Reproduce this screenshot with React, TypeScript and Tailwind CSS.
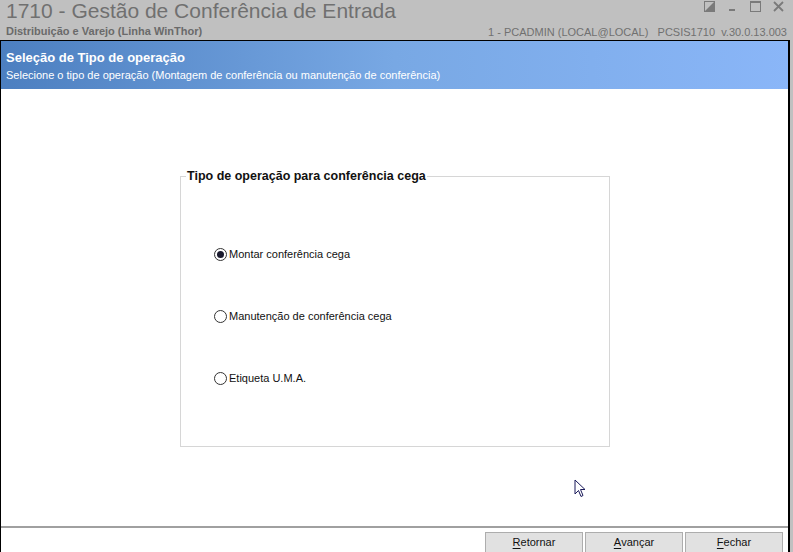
import React from "react";

const font = { fontFamily: "'Liberation Sans', Arial, sans-serif" };
const arial = { fontFamily: "'Liberation Sans', Arial, sans-serif" };

function Radio({ checked, label }: { checked?: boolean; label: string }) {
  return (
    <div className="flex items-center gap-[2px] h-[14px]">
      <span className="w-[13px] h-[13px] rounded-full border border-[#333] bg-white flex items-center justify-center">
        {checked && <span className="w-[7px] h-[7px] rounded-full bg-[#1a1a2e]" />}
      </span>
      <span className="text-[11px] text-[#111] leading-none" style={font}>{label}</span>
    </div>
  );
}

function Btn({ u, rest }: { u: string; rest: string }) {
  return (
    <div className="w-[98px] h-[21px] bg-[#e1e1e1] border border-[#adadad] flex items-center justify-center text-[11px] text-[#111]" style={font}>
      <span className="underline underline-offset-2">{u}</span>
      <span>{rest}</span>
    </div>
  );
}

export default function App() {
  return (
    <div className="w-[793px] h-[552px] bg-[#c0c0c0] flex flex-col overflow-hidden relative" style={arial}>
      {/* top bar */}
      <div className="h-[40px] flex justify-between px-[6px] relative">
        <div className="flex flex-col">
          <div className="text-[21px] leading-[22px] text-[#707070]">1710 - Gestão de Conferência de Entrada</div>
          <div className="text-[11px] font-bold text-[#6a6a6a] mt-[1px]">Distribuição e Varejo (Linha WinThor)</div>
        </div>
        <div className="flex flex-col items-end">
          <div className="flex items-center gap-[12px] h-[14px] mt-[0px] pr-[3px]">
            <svg width="11" height="11" viewBox="0 0 11 11"><rect x="0.5" y="0.5" width="10" height="10" fill="none" stroke="#7a7a7a" /><path d="M0 11 L11 0 L11 11 Z" fill="#7a7a7a" /></svg>
            <svg width="11" height="11" viewBox="0 0 11 11"><rect x="2" y="8" width="6" height="2" fill="#7a7a7a" /></svg>
            <svg width="11" height="11" viewBox="0 0 11 11"><rect x="0.5" y="0.5" width="10" height="10" fill="none" stroke="#7a7a7a" /><rect x="0" y="0" width="11" height="2" fill="#7a7a7a" /></svg>
            <svg width="11" height="11" viewBox="0 0 11 11"><path d="M1 1 L10 10 M10 1 L1 10" stroke="#7a7a7a" strokeWidth="1.8" /></svg>
          </div>
          <div className="text-[11px] text-[#707070] mt-[10px] mr-[0px]">1 - PCADMIN (LOCAL@LOCAL)&nbsp;&nbsp;&nbsp;PCSIS1710&nbsp;&nbsp;v.30.0.13.003</div>
        </div>
      </div>
      {/* window */}
      <div className="flex-1 w-[790px] border-l border-t border-r-2 border-black bg-white flex flex-col">
        <div className="h-[48px] bg-gradient-to-r from-[#4c7fc0] via-[#78a8e4] to-[#8ab6f8] px-[5px] pt-[9px] text-white">
          <div className="text-[13px] font-bold leading-[16px]">Seleção de Tipo de operação</div>
          <div className="text-[11px] leading-[14px] mt-[2px]">Selecione o tipo de operação (Montagem de conferência ou manutenção de conferência)</div>
        </div>
        <div className="flex-1 relative flex flex-col">
          <div className="flex-1 pt-[87px] pl-[179px]">
            <div className="w-[430px] h-[271px] border border-[#d6d6d6] relative">
              <div className="absolute left-[5px] top-[-9px] bg-white px-[1px] text-[12.5px] font-bold text-[#111] leading-[16px]" style={font}>Tipo de operação para conferência cega</div>
              <div className="pl-[33px] pt-[70px] flex flex-col gap-[48px]">
                <Radio checked label="Montar conferência cega" />
                <Radio label="Manutenção de conferência cega" />
                <Radio label="Etiqueta U.M.A." />
              </div>
            </div>
          </div>
          <svg className="absolute left-[573px] top-[390px]" width="13" height="20" viewBox="0 0 13 20">
            <path d="M1 1 L1 15 L4.5 11.5 L7 17.5 L9 16.5 L6.5 10.5 L11 10.5 Z" fill="white" stroke="#1a1a5a" strokeWidth="1" />
          </svg>
          <div className="h-[26px] border-t-2 border-[#a0a0a0] flex justify-end gap-[2px] pr-[5px] pt-[4px]">
            <Btn u="R" rest="etornar" />
            <Btn u="A" rest="vançar" />
            <Btn u="F" rest="echar" />
          </div>
        </div>
      </div>
    </div>
  );
}
